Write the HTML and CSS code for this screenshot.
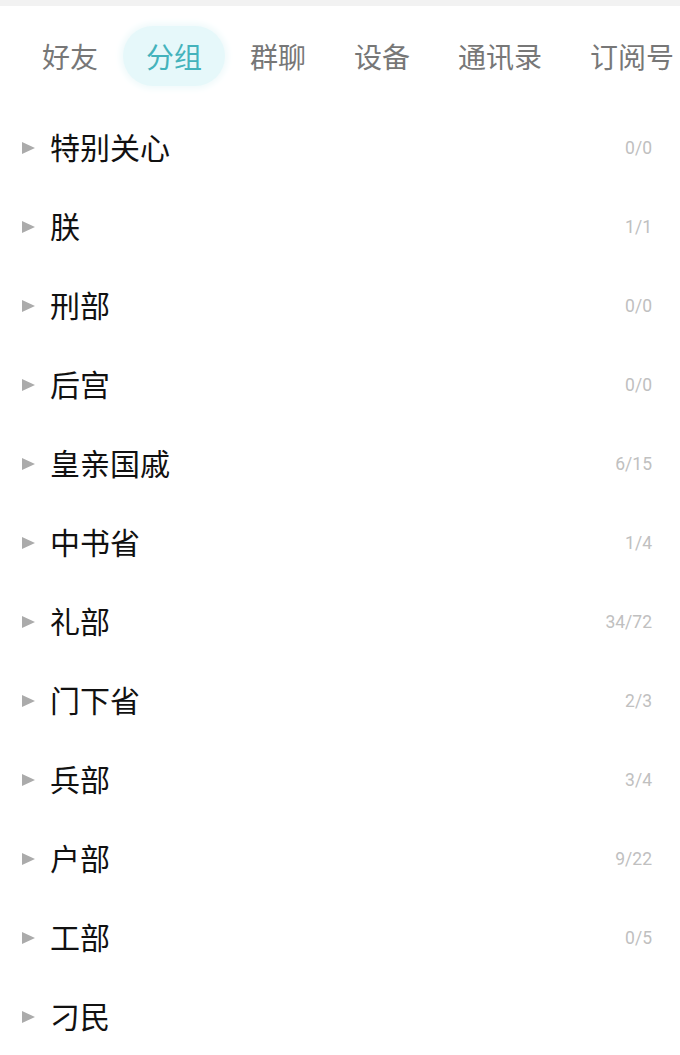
FILE: index.html
```html
<!DOCTYPE html>
<html lang="zh">
<head>
<meta charset="utf-8">
<link rel="stylesheet" href="styles.css">
</head>
<body>
<div class="topbar"></div>
<nav class="tabs">
  <span class="tab">好友</span>
  <span class="tab active">分组</span>
  <span class="tab">群聊</span>
  <span class="tab">设备</span>
  <span class="tab">通讯录</span>
  <span class="tab">订阅号</span>
</nav>
<ul class="groups">
  <li class="row"><span class="arrow"></span><span class="name">特别关心</span><span class="count">0/0</span></li>
  <li class="row"><span class="arrow"></span><span class="name">朕</span><span class="count">1/1</span></li>
  <li class="row"><span class="arrow"></span><span class="name">刑部</span><span class="count">0/0</span></li>
  <li class="row"><span class="arrow"></span><span class="name">后宫</span><span class="count">0/0</span></li>
  <li class="row"><span class="arrow"></span><span class="name">皇亲国戚</span><span class="count">6/15</span></li>
  <li class="row"><span class="arrow"></span><span class="name">中书省</span><span class="count">1/4</span></li>
  <li class="row"><span class="arrow"></span><span class="name">礼部</span><span class="count">34/72</span></li>
  <li class="row"><span class="arrow"></span><span class="name">门下省</span><span class="count">2/3</span></li>
  <li class="row"><span class="arrow"></span><span class="name">兵部</span><span class="count">3/4</span></li>
  <li class="row"><span class="arrow"></span><span class="name">户部</span><span class="count">9/22</span></li>
  <li class="row"><span class="arrow"></span><span class="name">工部</span><span class="count">0/5</span></li>
  <li class="row"><span class="arrow"></span><span class="name">刁民</span><span class="count"></span></li>
</ul>
</body>
</html>
```
FILE: styles.css
```css
html, body {
  margin: 0;
  padding: 0;
  background: #ffffff;
  overflow: hidden;
}
body {
  font-family: "Noto Sans CJK SC", "Noto Sans", sans-serif;
  width: 680px;
  height: 1055px;
}
.topbar {
  height: 6px;
  background: #f2f2f2;
}
.tabs {
  height: 102px;
  display: flex;
  align-items: center;
  gap: 48px;
  padding-left: 42px;
  white-space: nowrap;
  overflow: hidden;
}
.tab {
  font-size: 28px;
  line-height: 1;
  color: #777777;
  flex-shrink: 0;
  position: relative;
  isolation: isolate;
  margin-top: -2px;
}
.tab.active {
  color: #44b3bc;
}
.tab.active::before {
  content: "";
  position: absolute;
  left: -23px;
  right: -23px;
  top: -16px;
  bottom: -16px;
  border-radius: 32px;
  background: #e6f8fa;
  box-shadow: 0 0 6px 3px #f0fafb;
  z-index: -1;
}
.groups {
  list-style: none;
  margin: 0;
  padding: 0;
}
.row {
  height: 79px;
  display: flex;
  align-items: center;
  padding-left: 22px;
  padding-right: 28px;
}
.arrow {
  width: 0;
  height: 0;
  border-top: 6.5px solid transparent;
  border-bottom: 6.5px solid transparent;
  border-left: 13px solid #ababab;
  margin-right: 15px;
  flex-shrink: 0;
}
.name {
  font-size: 30px;
  line-height: 1;
  color: #111111;
  flex: 1;
  margin-top: -3px;
}
.count {
  font-family: Roboto, "Noto Sans", sans-serif;
  font-size: 17.5px;
  color: #c0c0c0;
}
```
